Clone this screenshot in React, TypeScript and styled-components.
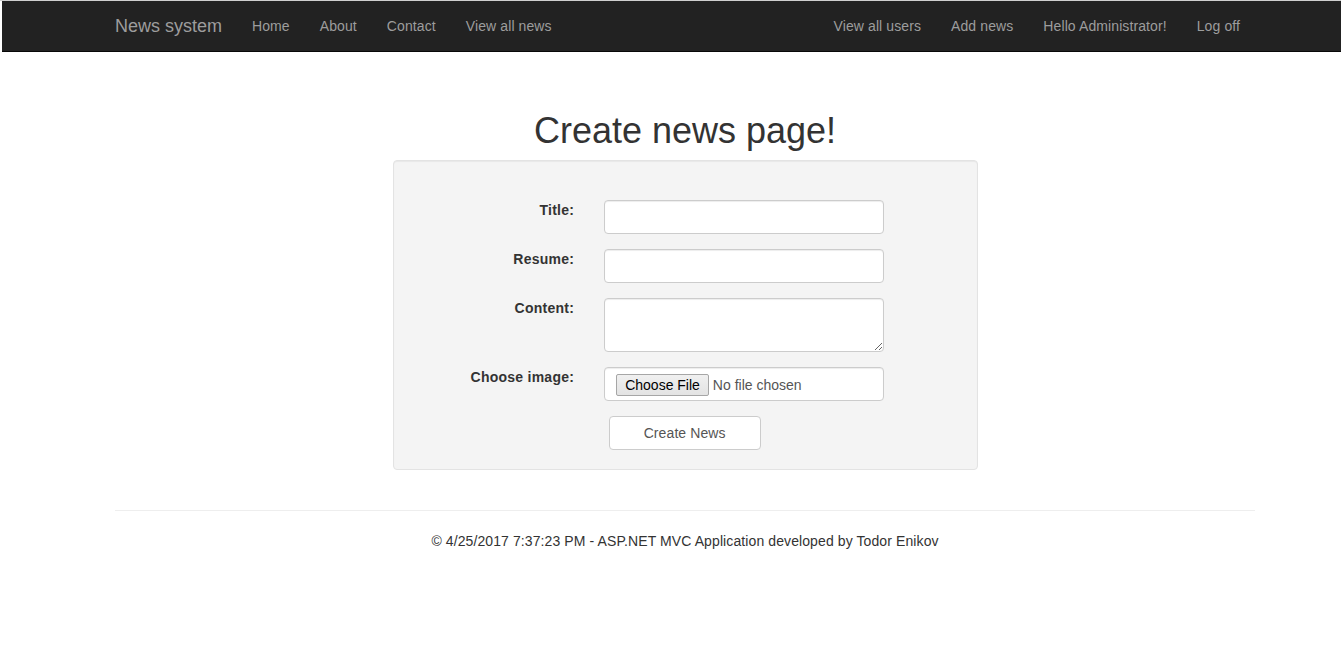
import React from "react";
import styled, { createGlobalStyle } from "styled-components";

const GlobalStyle = createGlobalStyle`
  * { box-sizing: border-box; }
  html, body { margin: 0; padding: 0; background: #fff; }
  body {
    font-family: "Liberation Sans", Arial, Helvetica, sans-serif;
    font-size: 14px;
    line-height: 1.42857143;
    color: #333;
    letter-spacing: 0.1px;
    overflow: hidden;
  }
`;

const Frame = styled.div`
  border-top: 1px solid #cfcfcf;
  padding-left: 2px;
  min-height: 660px;
`;

const Navbar = styled.nav`
  background: #222;
  border-bottom: 1px solid #080808;
  height: 51px;
`;

const Container = styled.div`
  width: 1170px;
  margin-left: 98px;
  padding: 0 15px;
`;

const NavInner = styled(Container)`
  display: flex;
  align-items: flex-start;
`;

const Brand = styled.a`
  display: block;
  margin-left: -15px;
  padding: 15px;
  font-size: 18px;
  line-height: 20px;
  height: 50px;
  color: #9d9d9d;
  text-decoration: none;
  letter-spacing: 0;
`;

const NavList = styled.ul<{ $right?: boolean }>`
  display: flex;
  list-style: none;
  margin: 0;
  padding: 0;
  margin-left: ${(p) => (p.$right ? "auto" : "0")};
`;

const NavLink = styled.a`
  display: block;
  padding: 15px;
  line-height: 20px;
  color: #9d9d9d;
  text-decoration: none;
`;

const Main = styled(Container)`
  padding-top: 39px;
`;

const Title = styled.h1`
  margin: 20px 0 9px;
  font-size: 36px;
  font-weight: 500;
  line-height: 1.1;
  text-align: center;
  color: #333;
  letter-spacing: 0;
`;

const Well = styled.div`
  width: 585px;
  margin: 0 auto 20px;
  padding: 19px;
  background: #f4f4f4;
  border: 1px solid #e3e3e3;
  border-radius: 4px;
  box-shadow: inset 0 1px 1px rgba(0, 0, 0, 0.05);
`;

const Form = styled.form`
  padding-top: 20px;
`;

const FormGroup = styled.div<{ $last?: boolean }>`
  display: grid;
  grid-template-columns: 191.67px 1fr;
  margin: 0 -15px ${(p) => (p.$last ? "0" : "15px")};
`;

const Label = styled.label`
  padding: 0 15px;
  text-align: right;
  font-weight: bold;
  line-height: 20px;
  color: #333;
  letter-spacing: 0.25px;
`;

const Field = styled.div<{ $offset?: number }>`
  grid-column: 2;
  padding: 0 15px 0 ${(p) => 15 + (p.$offset ?? 0)}px;
`;

const controlStyles = `
  display: block;
  width: 100%;
  max-width: 280px;
  padding: 6px 12px;
  font-family: "Liberation Sans", Arial, Helvetica, sans-serif;
  font-size: 14px;
  line-height: 1.42857143;
  color: #555;
  background: #fff;
  border: 1px solid #ccc;
  border-radius: 4px;
  box-shadow: inset 0 1px 1px rgba(0, 0, 0, 0.075);
  outline: none;
`;

const Input = styled.input`
  ${controlStyles}
  height: 34px;
`;

const TextArea = styled.textarea`
  ${controlStyles}
  height: 54px;
  resize: vertical;
`;

const FileInput = styled.input`
  ${controlStyles}
  height: 34px;
  padding-left: 11px;
  &::file-selector-button {
    font-family: "Liberation Sans", Arial, Helvetica, sans-serif;
    font-size: 14px;
    line-height: 18px;
    height: 22px;
    padding: 1px 8px;
    margin: 0 4px 0 0;
    color: #000;
    background: linear-gradient(#f0f0f0, #e3e3e3);
    border: 1px solid #a6a6a6;
    border-radius: 2px;
  }
`;

const Button = styled.button`
  display: inline-block;
  width: 152px;
  height: 34px;
  padding: 6px 12px;
  font-family: "Liberation Sans", Arial, Helvetica, sans-serif;
  font-size: 14px;
  line-height: 1.42857143;
  color: #555;
  background: #fff;
  border: 1px solid #ccc;
  border-radius: 4px;
  letter-spacing: 0.1px;
  cursor: pointer;
`;

const Rule = styled.hr`
  margin: 40px 0 20px;
  border: 0;
  border-top: 1px solid #eee;
`;

const FooterText = styled.p`
  margin: 0 0 10px;
  text-align: center;
  color: #333;
`;

const leftLinks = ["Home", "About", "Contact", "View all news"];
const rightLinks = ["View all users", "Add news", "Hello Administrator!", "Log off"];

export default function App() {
  return (
    <>
      <GlobalStyle />
      <Frame>
        <Navbar>
          <NavInner>
            <Brand href="#">News system</Brand>
            <NavList>
              {leftLinks.map((l) => (
                <li key={l}>
                  <NavLink href="#">{l}</NavLink>
                </li>
              ))}
            </NavList>
            <NavList $right>
              {rightLinks.map((l) => (
                <li key={l}>
                  <NavLink href="#">{l}</NavLink>
                </li>
              ))}
            </NavList>
          </NavInner>
        </Navbar>
        <Main>
          <Title>Create news page!</Title>
          <Well>
            <Form onSubmit={(e) => e.preventDefault()}>
              <FormGroup>
                <Label htmlFor="title">Title:</Label>
                <Field>
                  <Input id="title" type="text" />
                </Field>
              </FormGroup>
              <FormGroup>
                <Label htmlFor="resume">Resume:</Label>
                <Field>
                  <Input id="resume" type="text" />
                </Field>
              </FormGroup>
              <FormGroup>
                <Label htmlFor="content">Content:</Label>
                <Field>
                  <TextArea id="content" rows={2} />
                </Field>
              </FormGroup>
              <FormGroup>
                <Label htmlFor="image">Choose image:</Label>
                <Field>
                  <FileInput id="image" type="file" />
                </Field>
              </FormGroup>
              <FormGroup $last>
                <Field $offset={4.5}>
                  <Button type="submit">Create News</Button>
                </Field>
              </FormGroup>
            </Form>
          </Well>
          <Rule />
          <footer>
            <FooterText>
              © 4/25/2017 7:37:23 PM - ASP.NET MVC Application developed by Todor Enikov
            </FooterText>
          </footer>
        </Main>
      </Frame>
    </>
  );
}
